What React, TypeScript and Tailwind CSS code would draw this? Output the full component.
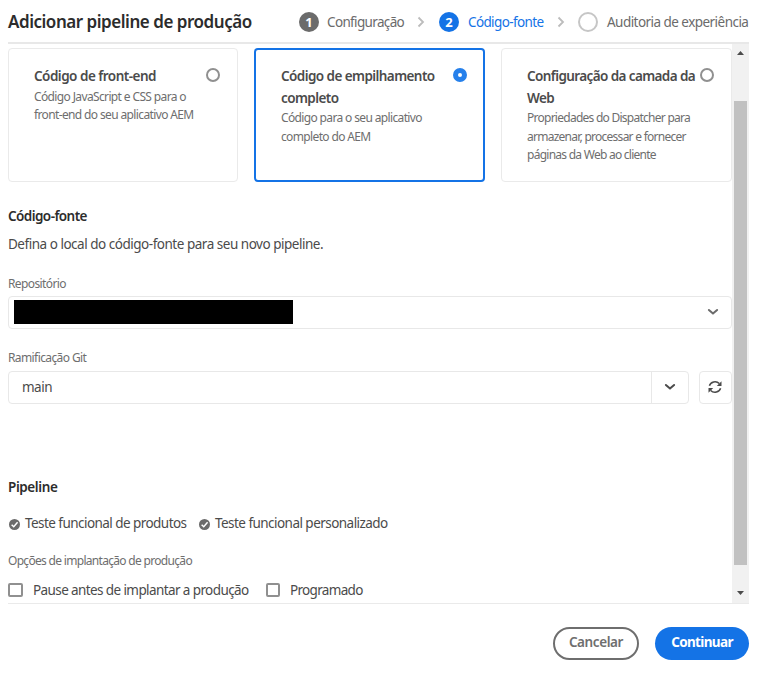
import React from "react";

function Radio({ checked = false }: { checked?: boolean }) {
  return (
    <span
      className={
        checked
          ? "mt-[2px] block h-[14px] w-[14px] shrink-0 rounded-full border-[5px] border-[#2680eb] bg-white"
          : "mt-[2px] block h-[14px] w-[14px] shrink-0 rounded-full border-2 border-[#909090] bg-white"
      }
    />
  );
}

function Check() {
  return (
    <svg width="11" height="11" viewBox="0 0 10 10" className="block shrink-0">
      <circle cx="5" cy="5" r="5" fill="#6b6b6b" />
      <path d="M2.4 5.2 4.3 7.1 7.8 2.9" fill="none" stroke="#fff" strokeWidth="1.3" />
    </svg>
  );
}

function Chevron({ color }: { color: string }) {
  return (
    <svg width="12" height="8" viewBox="0 0 12 8" className="-mt-px">
      <path d="M1.9 2 6 5.6 10.1 2" fill="none" stroke={color} strokeWidth="2" strokeLinecap="round" strokeLinejoin="round" />
    </svg>
  );
}

function StepArrow({ className }: { className: string }) {
  return (
    <svg width="8" height="12" viewBox="0 0 8 12" className={className}>
      <path d="M1.5 1.5 6 6 1.5 10.5" fill="none" stroke="#bcbcbc" strokeWidth="1.8" />
    </svg>
  );
}

export default function App() {
  return (
    <div className="h-[682px] w-[774px] overflow-hidden bg-white pl-2 font-['Noto_Sans',sans-serif] text-sm whitespace-nowrap text-[#4b4b4b]">
      <header className="flex h-[44px] w-[741px] items-center border-b-2 border-[#e8e8e8] pt-[2px]">
        <h1 className="w-[291px] shrink-0 text-[17px] font-semibold tracking-[-0.47px] text-[#2c2c2c]">
          Adicionar pipeline de produção
        </h1>
        <span className="flex h-5 w-5 shrink-0 items-center justify-center rounded-full bg-[#6b6b6b] text-[13px] font-bold text-white">1</span>
        <span className="ml-2 w-[78px] shrink-0 pt-[2px] text-[13.5px] tracking-[-0.65px] text-[#6b6b6b]">Configuração</span>
        <StepArrow className="ml-3 shrink-0" />
        <span className="ml-[14px] flex h-5 w-5 shrink-0 items-center justify-center rounded-full bg-[#1473e6] text-[13px] font-bold text-white">2</span>
        <span className="ml-[9px] w-[77px] shrink-0 pt-[2px] text-[13.5px] tracking-[-0.63px] text-[#1473e6]">Código-fonte</span>
        <StepArrow className="ml-3 shrink-0" />
        <span className="ml-[13px] h-5 w-5 shrink-0 rounded-full border-2 border-[#c6c6c6]" />
        <span className="ml-[9px] pt-[2px] text-[13.5px] tracking-[-0.54px] text-[#6b6b6b]">Auditoria de experiência</span>
      </header>

      <div className="flex h-[560px] w-[741px] border-b border-[#eaeaea]">
        <main className="w-[724px] shrink-0 pt-1">
          <div className="flex gap-4">
            <section className="flex h-[134px] w-[230px] justify-between rounded border border-[#eaeaea] pt-[17px] pr-[17px] pl-[25px]">
              <div>
                <h2 className="text-[13.5px] leading-[21.5px] font-semibold tracking-[-0.51px]">Código de front-end</h2>
                <p className="text-[12px] leading-[18.5px] tracking-[-0.63px] text-[#6e6e6e]">
                  Código JavaScript e CSS para o<br />front-end do seu aplicativo AEM
                </p>
              </div>
              <Radio />
            </section>
            <section className="flex h-[134px] w-[231px] justify-between rounded border-2 border-[#1473e6] pt-4 pr-4 pl-[25px]">
              <div>
                <h2 className="text-[13.5px] leading-[21.5px] font-semibold tracking-[-0.57px]">Código de empilhamento<br />completo</h2>
                <p className="text-[12px] leading-[18.5px] tracking-[-0.64px] text-[#6e6e6e]">
                  Código para o seu aplicativo<br />completo do AEM
                </p>
              </div>
              <Radio checked />
            </section>
            <section className="flex h-[134px] w-[231px] justify-between rounded border border-[#eaeaea] pt-[17px] pr-[17px] pl-[25px]">
              <div className="w-[172px]">
                <h2 className="text-[13.5px] leading-[21.5px] font-semibold tracking-[-0.6px]">Configuração da camada da<br />Web</h2>
                <p className="text-[12px] leading-[18.5px] tracking-[-0.74px] text-[#6e6e6e]">
                  Propriedades do Dispatcher para<br />armazenar, processar e fornecer<br />páginas da Web ao cliente
                </p>
              </div>
              <Radio />
            </section>
          </div>

          <h2 className="mt-[23px] text-[13.5px] leading-[22px] font-semibold tracking-[-0.56px] text-[#2c2c2c]">Código-fonte</h2>
          <p className="mt-[6px] text-[13.5px] leading-[22px] tracking-[-0.48px]">Defina o local do código-fonte para seu novo pipeline.</p>

          <label className="mt-5 block text-[12px] leading-[18px] tracking-[-0.6px] text-[#6e6e6e]">Repositório</label>
          <div className="mt-[3px] flex h-[33px] w-[724px] items-center justify-between rounded border border-[#e8e8e8] pr-[12px] pl-[5px]">
            <span className="-mt-px h-6 w-[279px] bg-black" />
            <Chevron color="#6b6b6b" />
          </div>

          <label className="mt-5 block text-[12px] leading-[18px] tracking-[-0.6px] text-[#6e6e6e]">Ramificação Git</label>
          <div className="mt-1 flex h-[33px] w-[724px] justify-between">
            <div className="flex w-[681px] rounded border border-[#e8e8e8]">
              <span className="flex-1 pl-[13px] text-[13.5px] leading-[30px] tracking-[-0.5px]">main</span>
              <span className="flex w-[37px] items-center justify-center border-l border-[#e8e8e8]">
                <Chevron color="#4b4b4b" />
              </span>
            </div>
            <span className="flex w-[33px] items-center justify-center rounded border border-[#e8e8e8]">
              <svg width="14" height="14" viewBox="0 0 14 14" fill="none" stroke="#4b4b4b" strokeWidth="1.5" className="-mt-px mr-px">
                <path d="M1.4 5.8A5.8 5.4 0 0 1 11.3 3.6M12.6 8.2A5.8 5.4 0 0 1 2.7 10.4" />
                <path d="M13.5 1.2V5.9H8.8ZM.5 12.8V8.1H5.2Z" fill="#4b4b4b" stroke="none" />
              </svg>
            </span>
          </div>

          <h2 className="mt-[72px] text-[13.5px] leading-[22px] font-semibold tracking-[-0.4px] text-[#2c2c2c]">Pipeline</h2>
          <div className="mt-[15px] flex h-[22px] items-center">
            <span className="ml-px"><Check /></span>
            <span className="ml-[5px] w-[162px] text-[13.5px] tracking-[-0.55px]">Teste funcional de produtos</span>
            <span className="ml-3"><Check /></span>
            <span className="ml-[5px] text-[13.5px] tracking-[-0.54px]">Teste funcional personalizado</span>
          </div>
          <p className="mt-[17px] text-[12px] leading-[18px] tracking-[-0.69px] text-[#6e6e6e]">Opções de implantação de produção</p>
          <div className="mt-[9px] flex h-[22px] items-center">
            <span className="-mt-px h-[14px] w-[15px] shrink-0 rounded-[2px] border-2 border-[#909090]" />
            <span className="ml-[10px] w-[217px] shrink-0 pt-[2px] text-[13.5px] tracking-[-0.6px]">Pause antes de implantar a produção</span>
            <span className="-mt-px ml-4 h-[14px] w-[14px] shrink-0 rounded-[2px] border-2 border-[#909090]" />
            <span className="ml-[10px] pt-[2px] text-[13.5px] tracking-[-0.68px]">Programado</span>
          </div>
        </main>
        <div className="flex w-[17px] flex-col items-center bg-[#f1f1f1] pt-[7px]">
          <svg width="7" height="4" viewBox="0 0 7 4" className="shrink-0"><path d="M0 4 3.5 0 7 4Z" fill="#4b4b4b" /></svg>
          <div className="mt-[46px] h-[464px] w-[13px] shrink-0 bg-[#c1c1c1]" />
          <svg width="7" height="4" viewBox="0 0 7 4" className="mt-[26px] shrink-0"><path d="M0 0 3.5 4 7 0Z" fill="#4b4b4b" /></svg>
        </div>
      </div>

      <footer className="mt-[23px] flex w-[741px] justify-end gap-4">
        <button className="h-[33px] w-[86px] rounded-full border-2 border-[#6e6e6e] pb-[2px] text-[13.5px] leading-[27px] font-semibold tracking-[-0.4px] text-[#6e6e6e]">Cancelar</button>
        <button className="h-[33px] w-[94px] rounded-full bg-[#1473e6] pb-[3px] text-[13.5px] leading-[30px] font-bold tracking-[-0.65px] text-white">Continuar</button>
      </footer>
    </div>
  );
}
